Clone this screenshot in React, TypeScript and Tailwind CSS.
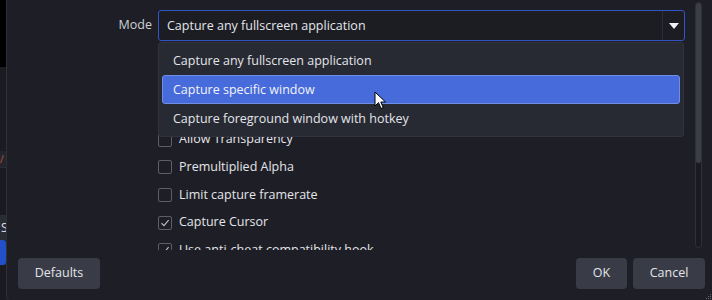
import React from 'react'

const options = [
  'Capture any fullscreen application',
  'Capture specific window',
  'Capture foreground window with hotkey',
]

const checks = [
  { label: 'Allow Transparency', on: false },
  { label: 'Premultiplied Alpha', on: false },
  { label: 'Limit capture framerate', on: false },
  { label: 'Capture Cursor', on: true },
  { label: 'Use anti-cheat compatibility hook', on: true },
]

function Check({ on }: { on: boolean }) {
  return (
    <div className="w-[14px] h-[14px] rounded-[2px] border border-[#5c5f6b] flex items-center justify-center shrink-0">
      {on && (
        <svg width="10" height="10" viewBox="0 0 10 10" fill="none">
          <path d="M1.5 5.2 L4 7.6 L8.6 2.2" stroke="#b8bac2" strokeWidth="1.2" />
        </svg>
      )}
    </div>
  )
}

function Cursor() {
  return (
    <svg width="13" height="19" viewBox="0 0 13 19" className="absolute left-[367px] top-[91px]">
      <path d="M1 1 L1 15 L4.5 11.6 L7 17.5 L9.2 16.6 L6.8 11 L11.5 11 Z" fill="#fff" stroke="#000" strokeWidth="1" />
    </svg>
  )
}

export default function App() {
  return (
    <div className="w-[712px] h-[300px] flex bg-[#1e1f26] overflow-hidden text-[12.5px] text-[#e4e5ea]" style={{ fontFamily: '"Open Sans", "Noto Sans", sans-serif' }}>
      {/* main window peeking out behind */}
      <div className="w-[6px] shrink-0 flex flex-col">
        <div className="h-[67px] bg-black" />
        <div className="h-[84px] bg-[#1b1c22]" />
        <div className="h-[16px] bg-[#24252c] text-[#c0504a] text-[10px] leading-[16px] overflow-hidden">/</div>
        <div className="h-[48px] bg-[#1a1b20] border-t border-[#2c2e36]" />
        <div className="h-[25px] bg-[#2a2c34] text-[12px] leading-[25px] text-[#dcdde2] overflow-hidden pl-[1px]">S</div>
        <div className="h-[25px] bg-[#2150c8] rounded-r-[3px]" />
        <div className="flex-1 bg-[#1a1b20]" />
      </div>

      {/* properties dialog */}
      <div className="relative flex-1 flex flex-col border-l border-[#2e3038] rounded-bl-[4px]">
        <div className="h-[250px] flex overflow-hidden">
          <div className="flex-1 flex flex-col pt-[10px]">
            <div className="flex items-center h-[31px]">
              <div className="w-[151px] text-right pr-[6px] text-[#cfd0d6]">Mode</div>
              <div className="w-[527px] h-[31px] shrink-0 flex border border-[#2f55c9] rounded-[3px] bg-[#1b1d23]">
                <div className="flex-1 pl-[8px] leading-[29px]">Capture any fullscreen application</div>
                <div className="w-[22px] border-l border-[#2c2e36] flex items-center justify-center">
                  <svg width="10" height="6" viewBox="0 0 10 6">
                    <path d="M0 0 H10 L5 6 Z" fill="#f2f2f4" />
                  </svg>
                </div>
              </div>
            </div>
            <div className="flex flex-col pl-[151px] pt-[85px]">
              {checks.map((c) => (
                <div key={c.label} className="h-[27.6px] flex items-center gap-[7px] shrink-0">
                  <Check on={c.on} />
                  <span>{c.label}</span>
                </div>
              ))}
            </div>
          </div>
          <div className="w-[7px] mr-[10px] mt-[2px] mb-[2px] rounded-full border border-[#2f313a] bg-[#1a1b21] flex flex-col">
            <div className="h-[160px] rounded-full bg-[#3b3e49]" />
          </div>
        </div>

        <div className="flex items-center justify-between pl-[11px] pr-[7px] pt-[8px]">
          <button className="w-[82px] h-[31px] rounded-[4px] bg-[#393c47] text-[#e4e5ea]">Defaults</button>
          <div className="flex gap-[6px]">
            <button className="w-[51px] h-[31px] rounded-[4px] bg-[#393c47] text-[#e4e5ea]">OK</button>
            <button className="w-[72px] h-[31px] rounded-[4px] bg-[#393c47] text-[#e4e5ea]">Cancel</button>
          </div>
        </div>

        {/* open combo popup */}
        <div className="absolute left-[151px] top-[42px] w-[526px] h-[95px] bg-[#272a33] border border-[#30333d] rounded-[3px] p-[3px] flex flex-col">
          {options.map((o, i) => (
            <div
              key={o}
              className={
                i === 1
                  ? 'h-[29px] shrink-0 rounded-[3px] bg-[#476bdb] border border-[#6f8ee6] pl-[10px] leading-[27px] text-[#f2f4fa]'
                  : 'h-[29px] shrink-0 pl-[11px] leading-[29px]'
              }
            >
              {o}
            </div>
          ))}
        </div>

        <Cursor />

        <svg width="6" height="6" viewBox="0 0 6 6" className="absolute right-0 bottom-0">
          <rect x="4" y="0" width="1" height="1" fill="#6a6d78" />
          <rect x="2" y="2" width="1" height="1" fill="#6a6d78" />
          <rect x="4" y="2" width="1" height="1" fill="#6a6d78" />
          <rect x="0" y="4" width="1" height="1" fill="#6a6d78" />
          <rect x="2" y="4" width="1" height="1" fill="#6a6d78" />
          <rect x="4" y="4" width="1" height="1" fill="#6a6d78" />
        </svg>
      </div>
    </div>
  )
}
